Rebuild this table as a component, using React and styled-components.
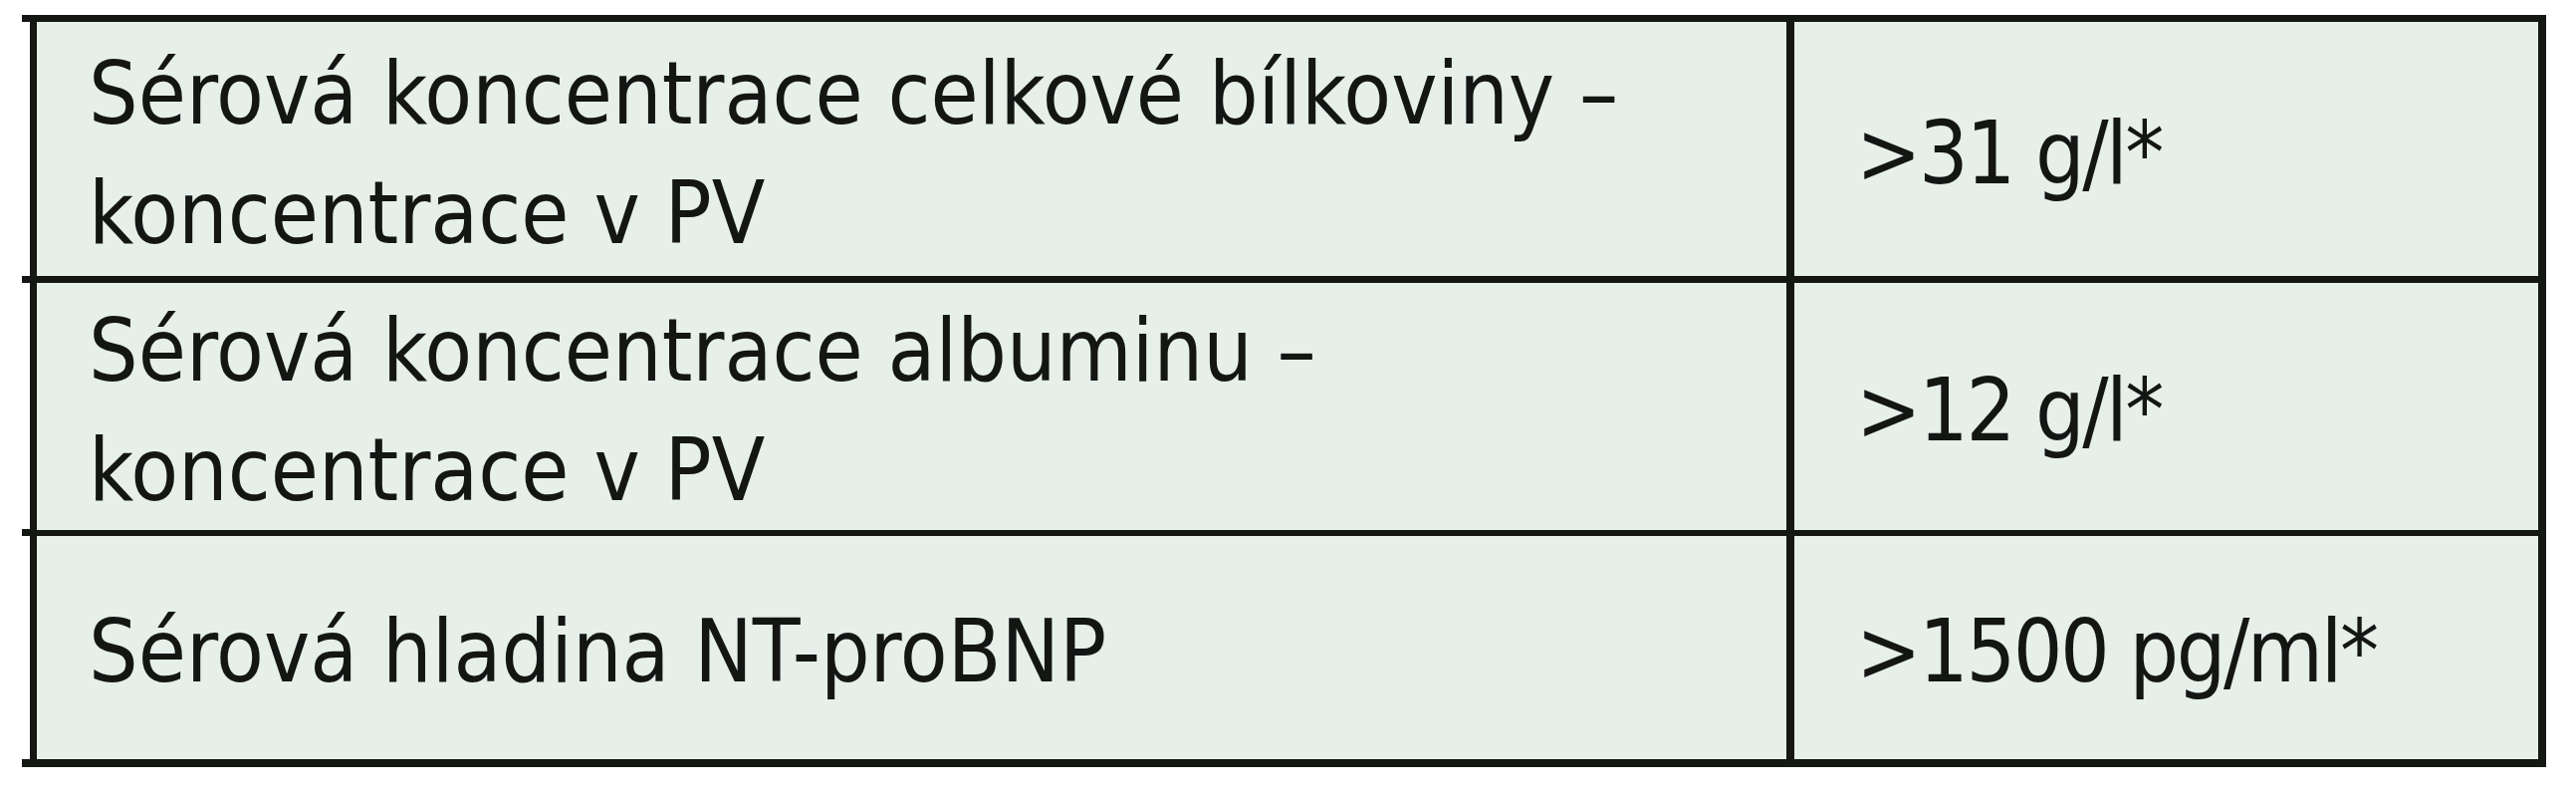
import React from "react";
import styled, { createGlobalStyle } from "styled-components";

const Global = createGlobalStyle`
  html, body { margin: 0; padding: 0; background: #ffffff; }
  body { font-family: "DejaVu Sans Condensed", "DejaVu Sans", sans-serif; }
`;

const Page = styled.div`
  width: 2587px;
  height: 800px;
  background: #ffffff;
  padding: 15px 0 0 22px;
  box-sizing: border-box;
`;

const Table = styled.div`
  width: 2535px;
  border-top: 7px solid #151715;
  display: flex;
  flex-direction: column;
`;

const Row = styled.div`
  display: grid;
  grid-template-columns: 1764px 763px;
  padding-left: 8px;
  height: ${(p) => p.$h}px;
  border-bottom: ${(p) => (p.$last ? 8 : 7)}px solid #151715;
`;

const Cell = styled.div`
  display: flex;
  flex-direction: column;
  justify-content: center;
  background: #e6efea;
  border-left: ${(p) => (p.$right ? 8 : 7)}px solid #151715;
  border-right: ${(p) => (p.$right ? "8px solid #151715" : "none")};
  padding: 8px 0 0 ${(p) => (p.$right ? 62 : 52)}px;
  font-family: "DejaVu Sans Condensed", "DejaVu Sans", sans-serif;
  font-stretch: condensed;
  font-size: 87px;
  line-height: 120px;
  letter-spacing: ${(p) => (p.$right ? "-2.5px" : "0")};
  color: #141614;
  white-space: nowrap;
`;

const Line = styled.span`
  display: block;
`;

const rows = [
  { h: 255, left: ["Sérová koncentrace celkové bílkoviny –", "koncentrace v PV"], right: ">31 g/l*" },
  { h: 247, left: ["Sérová koncentrace albuminu –", "koncentrace v PV"], right: ">12 g/l*" },
  { h: 224, left: ["Sérová hladina NT-proBNP"], right: ">1500 pg/ml*" },
];

export default function App() {
  return (
    <>
      <Global />
      <Page>
        <Table>
          {rows.map((r, i) => (
            <Row key={i} $h={r.h} $last={i === rows.length - 1}>
              <Cell>
                {r.left.map((l, j) => (
                  <Line key={j}>{l}</Line>
                ))}
              </Cell>
              <Cell $right>
                <Line>{r.right}</Line>
              </Cell>
            </Row>
          ))}
        </Table>
      </Page>
    </>
  );
}
